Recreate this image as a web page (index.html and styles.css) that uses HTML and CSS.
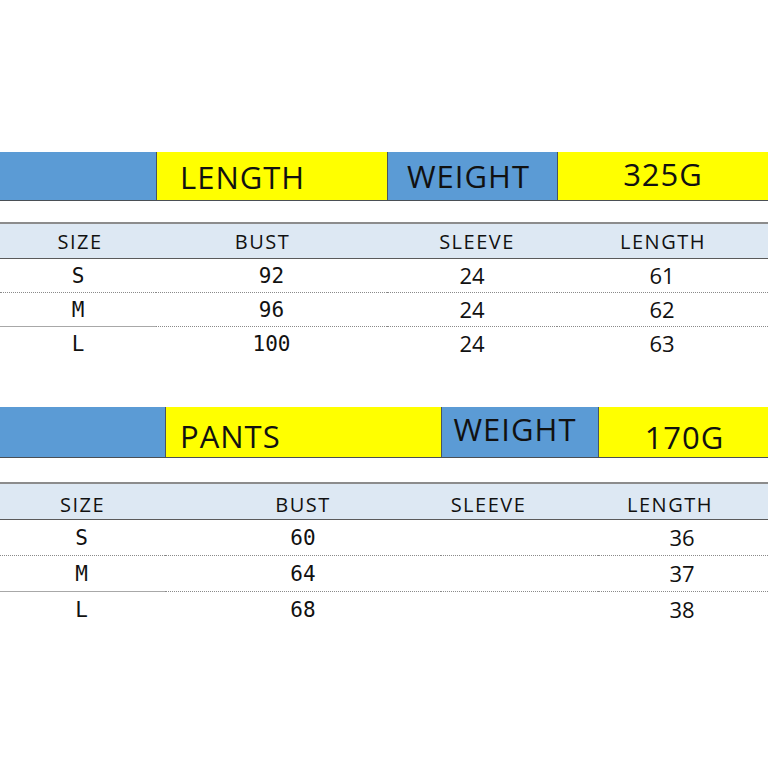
FILE: index.html
```html
<!DOCTYPE html>
<html>
<head>
<meta charset="utf-8">
<link rel="stylesheet" href="styles.css">
</head>
<body>
<div class="sheet">
  <section class="tbl t1">
    <div class="bar">
      <div class="cell blue"></div>
      <div class="cell yellow left length">LENGTH</div>
      <div class="cell blue weight">WEIGHT</div>
      <div class="cell yellow grams">325G</div>
    </div>
    <div class="head">
      <div class="h h-size">SIZE</div>
      <div class="h h-bust">BUST</div>
      <div class="h h-sleeve">SLEEVE</div>
      <div class="h h-length">LENGTH</div>
    </div>
    <div class="row">
      <div class="d mono">S</div>
      <div class="d mono">92</div>
      <div class="d sans">24</div>
      <div class="d sans">61</div>
    </div>
    <div class="row mid">
      <div class="d mono">M</div>
      <div class="d mono">96</div>
      <div class="d sans">24</div>
      <div class="d sans">62</div>
    </div>
    <div class="row last">
      <div class="d mono">L</div>
      <div class="d mono">100</div>
      <div class="d sans">24</div>
      <div class="d sans">63</div>
    </div>
  </section>

  <section class="tbl t2">
    <div class="bar">
      <div class="cell blue"></div>
      <div class="cell yellow left pants">PANTS</div>
      <div class="cell blue weight">WEIGHT</div>
      <div class="cell yellow grams">170G</div>
    </div>
    <div class="head">
      <div class="h h-size">SIZE</div>
      <div class="h h-bust">BUST</div>
      <div class="h h-sleeve">SLEEVE</div>
      <div class="h h-length">LENGTH</div>
    </div>
    <div class="row">
      <div class="d mono">S</div>
      <div class="d mono">60</div>
      <div class="d sans"></div>
      <div class="d sans">36</div>
    </div>
    <div class="row mid">
      <div class="d mono">M</div>
      <div class="d mono">64</div>
      <div class="d sans"></div>
      <div class="d sans">37</div>
    </div>
    <div class="row last">
      <div class="d mono">L</div>
      <div class="d mono">68</div>
      <div class="d sans"></div>
      <div class="d sans">38</div>
    </div>
  </section>
</div>
</body>
</html>
```

FILE: styles.css
```css
*, *::before, *::after {
  box-sizing: border-box;
}

html, body {
  margin: 0;
  padding: 0;
  background: #ffffff;
}

.sheet {
  width: 768px;
  height: 768px;
  padding-top: 152px;
  color: #111111;
  font-family: "Open Sans", "DejaVu Sans", sans-serif;
}

.tbl {
  display: flex;
  flex-direction: column;
}

.t2 {
  margin-top: 46px;
}

.bar, .head, .row {
  display: grid;
}

.t1 .bar, .t1 .head, .t1 .row {
  grid-template-columns: 156px 231px 170px 1fr;
}

.t2 .bar, .t2 .head, .t2 .row {
  grid-template-columns: 165px 276px 157px 1fr;
}

/* top coloured bar */
.bar {
  border-bottom: 1px solid #4a4f55;
}

.t1 .bar {
  height: 49px;
  grid-template-rows: 48px;
}

.t2 .bar {
  height: 51px;
  grid-template-rows: 50px;
}

.cell {
  font-size: 31px;
  letter-spacing: 1px;
  text-align: center;
  overflow: visible;
}

.cell + .cell {
  border-left: 1px solid #4a5560;
}

.blue {
  background: #5b9bd5;
}

.yellow {
  background: #ffff00;
}

.left {
  text-align: left;
  padding-left: 23px;
}

.t1 .length { line-height: 51px; }
.t1 .weight { line-height: 49px; padding-right: 8px; }
.t1 .grams  { line-height: 45px; }

.t2 .pants  { line-height: 59px; padding-left: 14px; }
.t2 .weight { line-height: 45px; padding-right: 10px; }
.t2 .grams  { line-height: 60px; padding-left: 2px; }

/* column heading row */
.head {
  border-top: 2px solid #8c8c8c;
  border-bottom: 1px solid #5a5a5a;
  background: #dde8f3;
}

.t1 .head {
  margin-top: 21px;
  height: 37px;
  grid-template-rows: 34px;
}

.t2 .head {
  margin-top: 24px;
  height: 38px;
  grid-template-rows: 35px;
}

.h {
  font-size: 20px;
  letter-spacing: 1.5px;
  text-align: center;
}

.t1 .h { line-height: 35px; }
.t2 .h { line-height: 41px; }

.t1 .h-size { padding-left: 4px; }
.t1 .h-bust { padding-right: 18px; }
.t1 .h-sleeve { padding-left: 10px; }
.t1 .h-length { padding-left: 1px; }

.t2 .h-sleeve { padding-right: 62px; }
.t2 .h-length { padding-right: 26px; }

/* data rows */
.d {
  text-align: center;
  border-bottom: 1px dotted #8a8a8a;
}

.t1 .d {
  height: 34px;
  line-height: 33px;
}

.t2 .d {
  height: 36px;
  line-height: 35px;
}

.row.mid .d:first-child {
  border-bottom: 1px solid #a8a8a8;
}

.row.last .d {
  border-bottom: none;
}

.mono {
  font-family: "DejaVu Sans Mono", "Liberation Mono", monospace;
  font-size: 21px;
  padding-top: 1px;
}

.sans {
  font-family: "Open Sans", "DejaVu Sans", sans-serif;
  font-size: 22px;
}

.t1 .sans:last-child {
  padding-right: 1px;
}

.t2 .d:first-child {
  padding-right: 2px;
}

.t2 .sans:last-child {
  padding-right: 2px;
}
```
